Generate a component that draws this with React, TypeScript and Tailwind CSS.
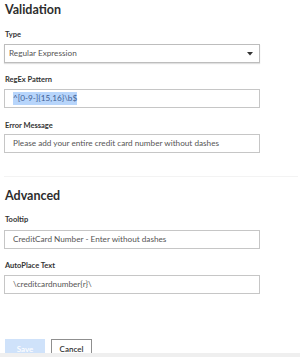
import { ReactNode } from "react";

const font = { fontFamily: "Lato, 'Noto Sans', sans-serif" };

function Label({ children, className = "" }: { children: ReactNode; className?: string }) {
  return (
    <div className={`pl-[1px] text-[7.5px] font-bold leading-[10px] text-[#333] ${className}`}>
      {children}
    </div>
  );
}

function Field({ children, className = "" }: { children: ReactNode; className?: string }) {
  return (
    <div
      className={`flex h-[19px] w-[256px] items-center border border-[#c6c6c6] bg-white pl-[8px] text-[8.2px] text-[#555] ${className}`}
    >
      {children}
    </div>
  );
}

export default function App() {
  return (
    <div className="h-[357px] w-[300px] overflow-hidden bg-white" style={font}>
      <div className="flex flex-col pl-[4px]">
        {/* Validation */}
        <h2 className="mt-[2px] pl-[1px] text-[12.5px] font-bold leading-[16px] text-[#2d2d2d]">Validation</h2>

        <Label className="mt-[12px]">Type</Label>
        <div className="mt-[4px] flex h-[19px] w-[256px] items-center justify-between border border-[#bdbdbd] bg-white pl-[4px] pr-[6px] text-[8.2px] text-[#555] shadow-[0_1px_1px_rgba(0,0,0,0.12)]">
          <span>Regular Expression</span>
          <svg width="6" height="4" viewBox="0 0 6 4">
            <path d="M0 0 L6 0 L3 3.5 Z" fill="#333" />
          </svg>
        </div>

        <Label className="mt-[12px]">RegEx Pattern</Label>
        <Field className="mt-[4px]">
          <span className="bg-[#b7d5fb] text-[#3f5f95]">^[0-9-]{"{15,16}"}\b$</span>
        </Field>

        <Label className="mt-[13px]">Error Message</Label>
        <Field className="mt-[3px]">Please add your entire credit card number without dashes</Field>

        <div className="mt-[23px] h-[1px] w-[294px] bg-[#f3f3f3]" />

        {/* Advanced */}
        <h2 className="mt-[11px] pl-[1px] text-[12.5px] font-bold leading-[16px] text-[#2d2d2d]">Advanced</h2>

        <Label className="mt-[11px]">Tooltip</Label>
        <Field className="mt-[5px]">CreditCard Number - Enter without dashes</Field>

        <Label className="mt-[12px]">AutoPlace Text</Label>
        <Field className="mt-[4px]">\creditcardnumber{"{r}"}\</Field>

        <div className="mt-[45px] flex h-[14px] items-start gap-[6px] overflow-hidden pl-[1px]">
          <button className="h-[20px] w-[40px] bg-[#cfe2fa] text-[8px] font-semibold leading-[18px] text-white">
            Save
          </button>
          <button className="h-[20px] w-[41px] border border-[#8f8f8f] bg-white text-[8px] font-semibold leading-[18px] text-[#333]">
            Cancel
          </button>
        </div>
      </div>
      <div className="h-[4px] w-full bg-[#efefef]" />
    </div>
  );
}
